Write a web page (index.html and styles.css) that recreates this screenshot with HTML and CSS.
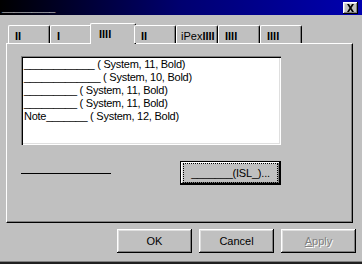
FILE: index.html
```html
<!DOCTYPE html>
<html lang="en">
<head>
    <meta charset="UTF-8">
    <title>Properties</title>
    <link rel="stylesheet" href="styles.css">
</head>
<body>
    <div class="window">
        <div class="titlebar">
            <span class="title">_________</span>
            <button class="close">
                <svg width="9" height="8" viewBox="0 0 9 8"><path d="M1 0h2l1.5 2.5L6 0h2L5.5 4 8 8H6L4.5 5.5 3 8H1l2.5-4z" fill="#000"/></svg>
            </button>
        </div>

        <!-- tab strip -->
        <div class="tabs">
            <div class="tab">II</div>
            <div class="tab">I</div>
            <div class="tab active">IIII</div>
            <div class="tab">II</div>
            <div class="tab tab-wide"><span class="plain">iPex</span>IIII</div>
            <div class="tab">IIII</div>
            <div class="tab">IIII</div>
        </div>

        <div class="panel">
            <div class="listbox">
                <div class="item">____________ ( System, 11, Bold)</div>
                <div class="item">_____________ ( System, 10, Bold)</div>
                <div class="item">_________ ( System, 11, Bold)</div>
                <div class="item">_________ ( System, 11, Bold)</div>
                <div class="item">Note_______ ( System, 12, Bold)</div>
            </div>
            <div class="row">
                <div class="rule"></div>
                <button class="btn default"><span class="focus">_______(ISL_)...</span></button>
            </div>
        </div>

        <div class="footer">
            <button class="btn">OK</button>
            <button class="btn">Cancel</button>
            <button class="btn" disabled><u>A</u>pply</button>
        </div>
    </div>
</body>
</html>
```

FILE: styles.css
```css
body { margin: 0; background-color: #c0c0c0; font-family: "Liberation Sans", Arial, sans-serif; font-size: 11px; color: #000; }
.window { width: 362px; height: 264px; box-sizing: border-box; border-bottom: 2px solid #202020; box-shadow: inset 0 -1px #808080; overflow: hidden; }

.titlebar { height: 15px; display: flex; align-items: center; justify-content: space-between; background: linear-gradient(90deg, #000000 0%, #000070 50%, #0000b0 100%); }
.title { color: #fff; font-weight: bold; line-height: 14px; padding-left: 2px; letter-spacing: -0.2px; align-self: flex-start; }
.close { width: 15px; height: 12px; margin-right: 4px; padding: 0; border: none; background: #c0c0c0; display: flex; align-items: center; justify-content: center; box-shadow: inset -1px -1px #000, inset 1px 1px #fff, inset -2px -2px #808080, inset 2px 2px #dfdfdf; }

.tabs { display: flex; align-items: flex-end; height: 20px; margin: 8px 0 0 8px; position: relative; z-index: 1; }
.tab { width: 42px; height: 18px; box-sizing: border-box; padding: 5px 0 0 6px; font-weight: bold; line-height: 11px; border-top: 1px solid #fff; border-left: 1px solid #fff; border-right: 1px solid #000; border-radius: 2px 2px 0 0; box-shadow: inset -1px 0 #808080; background: #c0c0c0; white-space: nowrap; }
.tab.active { width: 46px; height: 21px; margin: 0 -2px -1px; padding: 5px 0 0 8px; }
.tab-wide { padding-left: 4px; }
.plain { font-weight: normal; }

.panel { width: 347px; height: 180px; box-sizing: border-box; margin-left: 6px; padding: 12px 0 0 14px; border-top: 1px solid #fff; border-left: 1px solid #fff; border-right: 1px solid #000; border-bottom: 1px solid #000; box-shadow: inset -1px -1px #808080; }

.listbox { width: 260px; height: 89px; box-sizing: border-box; padding: 2px 2px 0; background: #fff; box-shadow: inset 1px 1px #808080, inset 2px 2px #000, inset -1px -1px #fff, inset -2px -2px #dfdfdf; }
.item { line-height: 13px; letter-spacing: -0.25px; white-space: nowrap; padding-left: 1px; }

.row { display: flex; align-items: center; margin-top: 16px; height: 24px; }
.rule { width: 90px; height: 1px; background: #000; margin-right: 69px; }

.btn { width: 75px; height: 24px; box-sizing: border-box; padding: 0; border: none; background: #c0c0c0; font-family: "Liberation Sans", Arial, sans-serif; font-size: 11px; color: #000; box-shadow: inset -1px -1px #000, inset 1px 1px #fff, inset -2px -2px #808080, inset 2px 2px #dfdfdf; }
.btn:disabled { color: #808080; text-shadow: 1px 1px #fff; }
.btn.default { width: 101px; border: 1px solid #000; padding: 1px 2px 3px 2px; }
.focus { display: flex; height: 100%; align-items: center; justify-content: center; border: 1px dotted #000; letter-spacing: -0.2px; }

.footer { display: flex; justify-content: flex-end; gap: 7px; padding: 6px 6px 0 0; }
```
